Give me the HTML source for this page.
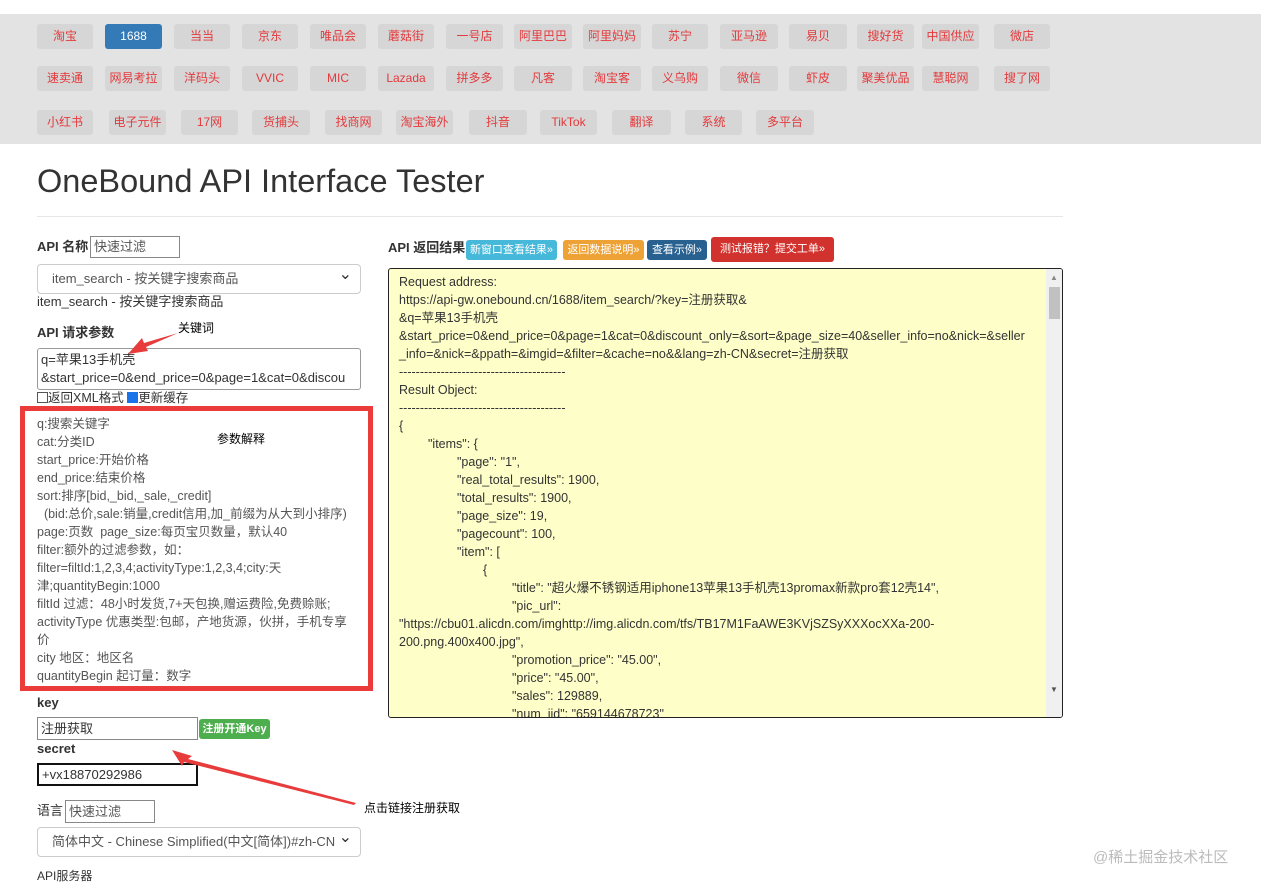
<!DOCTYPE html>
<html><head><meta charset="utf-8"><style>
*{box-sizing:border-box;margin:0;padding:0}
body{width:1261px;height:875px;overflow:hidden;background:#fff;font-family:"Liberation Sans","Noto Sans CJK SC",sans-serif;color:#333;position:relative}
.band{position:absolute;left:0;top:14px;width:1261px;height:130px;background:#e3e3e3}
.b{position:absolute;height:25px;line-height:25px;background:#d6d6d6;border-radius:3px;color:#e4393c;font-size:12px;text-align:center;white-space:nowrap}
.b.on{background:#337ab7;color:#fff}
.a{position:absolute;white-space:nowrap;line-height:16px}
h1{position:absolute;left:37px;top:162px;font-size:32.5px;line-height:38px;font-weight:normal;color:#333}
.hr{position:absolute;left:37px;top:216px;width:1026px;height:1px;background:#e6e6e6}
.lbl{font-weight:bold;font-size:13px}
.inp{position:absolute;border:1px solid #888;font-size:13px;padding-left:3px;background:#fff;white-space:nowrap}
.sel{position:absolute;border:1px solid #ccc;border-radius:4px;font-size:13px;background:#fff;padding-left:14px;color:#555;white-space:nowrap}
.sel:after{content:"⌄";position:absolute;right:8px;top:-4px;font-size:16px;color:#333}
.ta{position:absolute;left:388px;top:268px;width:675px;height:450px;background:#fefec9;border:1px solid #222;border-radius:3px;overflow:hidden}
.ta div{position:absolute;white-space:nowrap;font-size:12.5px;line-height:18px;height:18px;color:#333}
.sb{position:absolute;right:0;top:0;width:16px;height:448px!important;background:#f0f0f0}
.btn{position:absolute;font-size:11px;color:#fff;border-radius:3px;height:20px;line-height:20px;text-align:center;white-space:nowrap;overflow:hidden}
.red{position:absolute;left:20px;top:406px;width:353px;height:285px;border:5px solid #ec3b3b}
.p{position:absolute;left:37px;font-size:12.5px;line-height:18px;height:18px;color:#555;white-space:nowrap}
</style></head><body>
<div class="band"></div>
<div class="b" style="left:37px;top:24px;width:56px">淘宝</div>
<div class="b on" style="left:105px;top:24px;width:57px">1688</div>
<div class="b" style="left:174px;top:24px;width:56px">当当</div>
<div class="b" style="left:242px;top:24px;width:56px">京东</div>
<div class="b" style="left:310px;top:24px;width:56px">唯品会</div>
<div class="b" style="left:378px;top:24px;width:56px">蘑菇街</div>
<div class="b" style="left:446px;top:24px;width:57px">一号店</div>
<div class="b" style="left:514px;top:24px;width:58px">阿里巴巴</div>
<div class="b" style="left:583px;top:24px;width:58px">阿里妈妈</div>
<div class="b" style="left:652px;top:24px;width:56px">苏宁</div>
<div class="b" style="left:720px;top:24px;width:58px">亚马逊</div>
<div class="b" style="left:789px;top:24px;width:58px">易贝</div>
<div class="b" style="left:857px;top:24px;width:57px">搜好货</div>
<div class="b" style="left:922px;top:24px;width:57px">中国供应</div>
<div class="b" style="left:994px;top:24px;width:56px">微店</div>

<div class="b" style="left:37px;top:66px;width:56px">速卖通</div>
<div class="b" style="left:105px;top:66px;width:57px">网易考拉</div>
<div class="b" style="left:174px;top:66px;width:56px">洋码头</div>
<div class="b" style="left:242px;top:66px;width:56px">VVIC</div>
<div class="b" style="left:310px;top:66px;width:56px">MIC</div>
<div class="b" style="left:378px;top:66px;width:56px">Lazada</div>
<div class="b" style="left:446px;top:66px;width:57px">拼多多</div>
<div class="b" style="left:514px;top:66px;width:58px">凡客</div>
<div class="b" style="left:583px;top:66px;width:58px">淘宝客</div>
<div class="b" style="left:652px;top:66px;width:56px">义乌购</div>
<div class="b" style="left:720px;top:66px;width:58px">微信</div>
<div class="b" style="left:789px;top:66px;width:58px">虾皮</div>
<div class="b" style="left:857px;top:66px;width:57px">聚美优品</div>
<div class="b" style="left:922px;top:66px;width:57px">慧聪网</div>
<div class="b" style="left:994px;top:66px;width:56px">搜了网</div>

<div class="b" style="left:37px;top:110px;width:56px">小红书</div>
<div class="b" style="left:109px;top:110px;width:57px">电子元件</div>
<div class="b" style="left:181px;top:110px;width:57px">17网</div>
<div class="b" style="left:252px;top:110px;width:58px">货捕头</div>
<div class="b" style="left:325px;top:110px;width:57px">找商网</div>
<div class="b" style="left:396px;top:110px;width:57px">淘宝海外</div>
<div class="b" style="left:469px;top:110px;width:58px">抖音</div>
<div class="b" style="left:540px;top:110px;width:57px">TikTok</div>
<div class="b" style="left:612px;top:110px;width:59px">翻译</div>
<div class="b" style="left:685px;top:110px;width:57px">系统</div>
<div class="b" style="left:756px;top:110px;width:58px">多平台</div>

<h1>OneBound API Interface Tester</h1>
<div class="hr"></div>

<div class="a lbl" style="left:37px;top:239px">API 名称</div>
<div class="inp" style="left:90px;top:236px;width:90px;height:22px;line-height:20px;color:#555">快速过滤</div>
<div class="sel" style="left:37px;top:264px;width:324px;height:30px;line-height:28px">item_search - 按关键字搜索商品</div>
<div class="a" style="left:37px;top:294px;font-size:13px">item_search - 按关键字搜索商品</div>
<div class="a lbl" style="left:37px;top:325px">API 请求参数</div>
<div class="a" style="left:178px;top:320px;font-size:12px;color:#000">关键词</div>
<div class="inp" style="left:37px;top:348px;width:324px;height:42px;border-color:#999;border-radius:3px;line-height:18px;padding-top:2px;overflow:hidden">q=苹果13手机壳<br>&amp;start_price=0&amp;end_price=0&amp;page=1&amp;cat=0&amp;discou</div>
<svg class="a" style="left:120px;top:330px" width="60" height="30"><polygon points="58,3 26,17 28,21 8,24 22,8 24,13" fill="#e83c3c"/></svg>
<div class="a" style="left:37px;top:391px;font-size:12.5px;line-height:15px"><span style="display:inline-block;width:11px;height:11px;border:1px solid #555;vertical-align:-1px"></span>返回XML格式 <span style="display:inline-block;width:11px;height:11px;background:#1a73e8;vertical-align:-1px"></span>更新缓存</div>

<div class="red"></div>
<div class="p" style="top:415px">q:搜索关键字</div>
<div class="p" style="top:433px">cat:分类ID</div>
<div class="p" style="top:451px">start_price:开始价格</div>
<div class="p" style="top:469px">end_price:结束价格</div>
<div class="p" style="top:487px">sort:排序[bid,_bid,_sale,_credit]</div>
<div class="p" style="top:505px">&nbsp;&nbsp;(bid:总价,sale:销量,credit信用,加_前缀为从大到小排序)</div>
<div class="p" style="top:523px">page:页数&nbsp; page_size:每页宝贝数量，默认40</div>
<div class="p" style="top:541px">filter:额外的过滤参数，如：</div>
<div class="p" style="top:559px">filter=filtId:1,2,3,4;activityType:1,2,3,4;city:天</div>
<div class="p" style="top:577px">津;quantityBegin:1000</div>
<div class="p" style="top:595px">filtId 过滤：48小时发货,7+天包换,赠运费险,免费赊账;</div>
<div class="p" style="top:613px">activityType 优惠类型:包邮，产地货源，伙拼，手机专享</div>
<div class="p" style="top:631px">价</div>
<div class="p" style="top:649px">city 地区：地区名</div>
<div class="p" style="top:667px">quantityBegin 起订量：数字</div>
<div class="a" style="left:217px;top:431px;font-size:12px;color:#000">参数解释</div>

<div class="a lbl" style="left:37px;top:695px">key</div>
<div class="inp" style="left:37px;top:717px;width:161px;height:23px;line-height:21px">注册获取</div>
<div class="btn" style="left:199px;top:719px;width:71px;background:#4cae4c;font-weight:bold">注册开通Key</div>
<div class="a lbl" style="left:37px;top:741px">secret</div>
<div class="inp" style="left:37px;top:763px;width:161px;height:23px;line-height:19px;border:2px solid #111">+vx18870292986</div>
<div class="a" style="left:37px;top:803px;font-size:13px">语言</div>
<div class="inp" style="left:65px;top:800px;width:90px;height:23px;line-height:21px;color:#555">快速过滤</div>
<div class="sel" style="left:37px;top:827px;width:324px;height:30px;line-height:28px">简体中文 - Chinese Simplified(中文[简体])#zh-CN</div>
<div class="a" style="left:37px;top:868px;font-size:12px">API服务器</div>
<svg class="a" style="left:170px;top:748px" width="190" height="60"><polygon points="2,2 22,8 18,11 186,55 184,57 14,14 12,18" fill="#e83c3c"/></svg>
<div class="a" style="left:364px;top:800px;font-size:12px;color:#000">点击链接注册获取</div>

<div class="a lbl" style="left:388px;top:240px">API 返回结果</div>
<div class="btn" style="left:466px;top:240px;width:91px;background:#46b8da">新窗口查看结果»</div>
<div class="btn" style="left:563px;top:240px;width:81px;background:#eea236">返回数据说明»</div>
<div class="btn" style="left:647px;top:240px;width:60px;background:#286090">查看示例»</div>
<div class="btn" style="left:711px;top:237px;width:123px;height:25px;line-height:25px;background:#d2322d">测试报错？提交工单»</div>

<div class="ta">
<div style="left:10px;top:4px">Request address:</div>
<div style="left:10px;top:22px">https://api-gw.onebound.cn/1688/item_search/?key=注册获取&amp;</div>
<div style="left:10px;top:40px">&amp;q=苹果13手机壳</div>
<div style="left:10px;top:58px">&amp;start_price=0&amp;end_price=0&amp;page=1&amp;cat=0&amp;discount_only=&amp;sort=&amp;page_size=40&amp;seller_info=no&amp;nick=&amp;seller</div>
<div style="left:10px;top:76px">_info=&amp;nick=&amp;ppath=&amp;imgid=&amp;filter=&amp;cache=no&amp;&amp;lang=zh-CN&amp;secret=注册获取</div>
<div style="left:10px;top:94px">----------------------------------------</div>
<div style="left:10px;top:112px">Result Object:</div>
<div style="left:10px;top:130px">----------------------------------------</div>
<div style="left:10px;top:148px">{</div>
<div style="left:39px;top:166px">"items": {</div>
<div style="left:68px;top:184px">"page": "1",</div>
<div style="left:68px;top:202px">"real_total_results": 1900,</div>
<div style="left:68px;top:220px">"total_results": 1900,</div>
<div style="left:68px;top:238px">"page_size": 19,</div>
<div style="left:68px;top:256px">"pagecount": 100,</div>
<div style="left:68px;top:274px">"item": [</div>
<div style="left:94px;top:292px">{</div>
<div style="left:123px;top:310px">"title": "超火爆不锈钢适用iphone13苹果13手机壳13promax新款pro套12壳14",</div>
<div style="left:123px;top:328px">"pic_url":</div>
<div style="left:10px;top:346px">"https://cbu01.alicdn.com/imghttp://img.alicdn.com/tfs/TB17M1FaAWE3KVjSZSyXXXocXXa-200-</div>
<div style="left:10px;top:364px">200.png.400x400.jpg",</div>
<div style="left:123px;top:382px">"promotion_price": "45.00",</div>
<div style="left:123px;top:400px">"price": "45.00",</div>
<div style="left:123px;top:418px">"sales": 129889,</div>
<div style="left:123px;top:436px">"num_iid": "659144678723"</div>
<div class="sb"><div style="left:3px;top:18px;width:11px;height:32px;background:#c1c1c1"></div><div style="left:4px;top:0px;font-size:8px;color:#888">▲</div><div style="left:4px;top:412px;font-size:8px;color:#555">▼</div></div>
</div>
<div class="a" style="left:1093px;top:848px;font-size:15px;line-height:20px;color:#bbb">@稀土掘金技术社区</div>
</body></html>
